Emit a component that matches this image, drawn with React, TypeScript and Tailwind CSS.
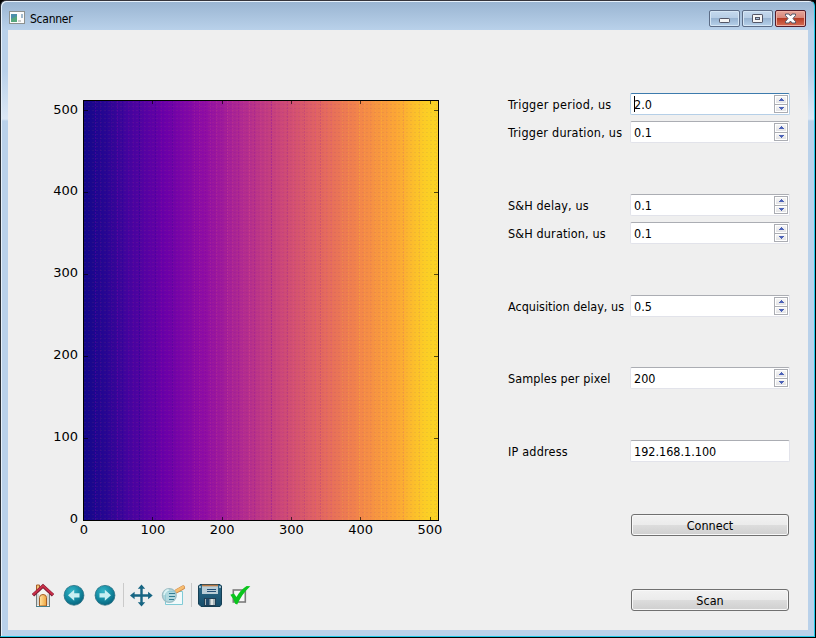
import type { ReactNode } from "react";

const UI_FONT = "font-['DejaVu_Sans_Condensed','DejaVu_Sans',sans-serif] [font-stretch:condensed]";

const PLASMA = [
  ["0", "#12078a"], ["0.05", "#220690"], ["0.12", "#41049d"], ["0.23", "#6a00a8"], ["0.34", "#8f0da4"],
  ["0.45", "#b12a90"], ["0.56", "#cc4778"], ["0.66", "#e16462"], ["0.77", "#f2844b"],
  ["0.88", "#fca636"], ["0.96", "#fcce25"], ["1", "#fad524"],
];

// Faint dotted column bands: offset inside the axes, and whether the band is lighter.
const BANDS = Array.from({ length: 64 }, (_, i) => ({ x: 5 + Math.round(i * 5.5), light: i % 3 !== 0, strong: i % 4 === 1 }));

function bandColor(x: number, light: boolean) {
  if (x < 100) return light ? "#8a00b0" : "#0d0887";
  if (x < 250) return light ? "#e05090" : "#7a00a8";
  return light ? "#ffc52d" : "#e8705c";
}

function Plot() {
  const ticks = [0, 1, 2, 3, 4, 5];
  return (
    <svg width="412" height="450" className="block font-['DejaVu_Sans',sans-serif] text-[13px] [font-stretch:normal]" fill="#000">
      <defs>
        <linearGradient id="plasma">
          {PLASMA.map(([o, c]) => <stop key={o} offset={o} stopColor={c} />)}
        </linearGradient>
        <pattern id="rows" width="4" height="4" patternUnits="userSpaceOnUse">
          <rect width="2" height="1" fill="#ff9030" opacity="0.06" />
          <rect x="2" y="2" width="2" height="1" fill="#20009a" opacity="0.06" />
        </pattern>
      </defs>
      <g shapeRendering="crispEdges">
        <rect x="43" y="10" width="356" height="421" fill="url(#plasma)" />
        <rect x="43" y="10" width="356" height="421" fill="url(#rows)" />
        {BANDS.map((b) => (
          <line key={b.x} x1={44.5 + b.x} x2={44.5 + b.x} y1="11" y2="430"
            stroke={bandColor(b.x, b.light)}
            strokeOpacity={b.strong ? 0.3 : 0.17} strokeDasharray="2 1" />
        ))}
        <rect x="43.5" y="10.5" width="355" height="420" fill="none" stroke="#000" />
        {ticks.map((t) => {
          const x = Math.round(43 + t * 69.3) + 0.5;
          const y = Math.round(429.5 - t * 81.9) + 0.5;
          return (
            <g key={t} stroke="#000" strokeOpacity="0.65">
              <path d={`M${x} 427V430M${x} 11V14`} />
              <path d={`M44 ${y}H48M394 ${y}H398`} />
            </g>
          );
        })}
      </g>
      {ticks.map((t) => (
        <g key={t}>
          <text x={43.8 + t * 69.2} y="444" textAnchor="middle">{t * 100}</text>
          <text x="38" y={433 - t * 81.9} textAnchor="end">{t * 100}</text>
        </g>
      ))}
    </svg>
  );
}

function SpinButtons() {
  return (
    <div className="mr-px flex h-[18px] w-[14px] shrink-0 flex-col gap-px border border-[#abadb3] bg-[#abadb3]">
      <div className="h-[8px] border border-white bg-gradient-to-b from-[#f5f5f5] to-[#e3e3e5]">
        <svg width="10" height="6" shapeRendering="crispEdges" className="block"><path d="M5 1h1v1h1v1h1v1H3V3h1V2h1z" fill="#4c62b8" /></svg>
      </div>
      <div className="h-[7px] border border-white bg-gradient-to-b from-[#f5f5f5] to-[#e3e3e5]">
        <svg width="10" height="5" shapeRendering="crispEdges" className="block"><path d="M3 1h5v1H7v1H6v1H5V3H4V2H3z" fill="#4c62b8" /></svg>
      </div>
    </div>
  );
}

function Row({ label, value, spin = true, focus = false, gap, tracking = "" }: { label: string; value: string; spin?: boolean; focus?: boolean; gap: string; tracking?: string }) {
  return (
    <div className={`flex h-[22px] items-center ${gap}`}>
      <div className={`w-[122px] whitespace-nowrap pt-[2px] text-[12.5px] ${tracking}`}>{label}</div>
      <div className={`flex h-[22px] w-[160px] items-center rounded-[2px] border bg-white text-[12.5px] ${focus ? "border-[#b5cfe7] border-t-[#3d7bad]" : "border-[#e2e3ea] border-t-[#abadb3]"}`}>
        <div className={`-mt-px ml-[3px] h-[16px] w-px ${focus ? "bg-black" : ""}`} />
        <span className="-ml-px flex-1 pt-[2px]">{value}</span>
        {spin && <SpinButtons />}
      </div>
    </div>
  );
}

function PushButton({ children, gap }: { children: ReactNode; gap: string }) {
  return (
    <button className={`ml-[123px] flex h-[22px] w-[158px] items-center justify-center rounded-[3px] border border-[#707070] bg-[linear-gradient(#f2f2f2,#ebebeb_49%,#dddddd_50%,#cfcfcf)] pt-[2px] text-[12.5px] shadow-[inset_0_0_0_1px_#f8f8f8] ${gap}`}>
      {children}
    </button>
  );
}

function Arrow({ flip = false }: { flip?: boolean }) {
  return (
    <svg width="22" height="24" viewBox="0 0 22 24" className="block">
      <defs>
        <radialGradient id={flip ? "orbR" : "orbL"} cx="0.4" cy="0.3" r="0.75">
          <stop offset="0" stopColor="#35b5c7" /><stop offset="0.55" stopColor="#148ba2" /><stop offset="1" stopColor="#07607a" />
        </radialGradient>
      </defs>
      <circle cx="11" cy="12.3" r="9.9" fill={flip ? "url(#orbR)" : "url(#orbL)"} stroke="#286f83" strokeWidth="0.8" />
      <path d="M5 12.3 11.2 6.8V10.2H16.5V14.6H11.2V17.8Z" fill="#c8eff2" transform={flip ? "translate(22 0) scale(-1 1)" : undefined} />
    </svg>
  );
}

function Toolbar() {
  return (
    <div className="flex h-6 items-center">
      <svg width="24" height="24" viewBox="0 0 24 24" className="block">
        <defs><linearGradient id="door"><stop stopColor="#ffe5a2" /><stop offset="1" stopColor="#efa33d" /></linearGradient></defs>
        <path d="M5.5 2H8.5V8H5.5Z" fill="#f4c477" stroke="#a65d29" strokeWidth="1" />
        <path d="M5.5 10 12 4 18.5 10V23.5H5.5Z" fill="#f4f4ef" stroke="#747d7e" />
        <path d="M7 11V22M17 11V22" stroke="#b6bbb9" />
        <path d="M8.5 23V14.5Q8.5 11.5 12 11.5T15.5 14.5V23Z" fill="url(#door)" stroke="#a45d24" />
        <path d="M5 23.5H19" stroke="#477f8c" />
        <path d="M2 12.2 12 3 22 12.2" fill="none" stroke="#7b1931" strokeWidth="3.4" />
        <path d="M2 11.8 12 2.7 22 11.8" fill="none" stroke="#c92f48" strokeWidth="1.9" />
      </svg>
      <div className="ml-[8px]"><Arrow /></div>
      <div className="ml-[9px]"><Arrow flip /></div>
      <div className="ml-[7px] h-6 w-px bg-[#cacaca]" />
      <svg width="24" height="24" viewBox="0 0 24 24" className="ml-[5px] block">
        <path d="M12.5 3V22M3 12.5H22" stroke="#176583" strokeWidth="2.4" />
        <path d="M12.5 1.5 16.2 5.7H8.8ZM12.5 23.5 8.8 19.3H16.2ZM1 12.5 5.6 8.8V16.2ZM23.7 12.5 19.1 8.8V16.2Z" fill="#176583" />
      </svg>
      <svg width="26" height="24" viewBox="0 0 26 24" className="ml-[8px] block">
        <path d="M4.5 8.5H21.5V21.5H4.5Z" fill="#f1fafb" stroke="#80cbd6" />
        <path d="M15.5 8.3 22 4.5" stroke="#c98343" strokeWidth="4.2" strokeLinecap="round" />
        <path d="M15.5 8 22 4.2" stroke="#f7bd70" strokeWidth="2.9" strokeLinecap="round" />
        <circle cx="8.3" cy="12.5" r="6.9" fill="#9ccdd5" fillOpacity="0.75" stroke="#9dbdc4" strokeWidth="1.3" />
        <path d="M3.2 12Q3.7 7.5 7.7 7" fill="none" stroke="#daf3f4" strokeWidth="1.8" />
        <path d="M8 10.5H14M8 13.5H14M8 16.5H13" stroke="#327e94" strokeWidth="1.1" />
      </svg>
      <div className="ml-[4px] h-6 w-px bg-[#cacaca]" />
      <svg width="24" height="24" viewBox="0 0 24 24" className="ml-[6px] block">
        <defs><linearGradient id="disk" x2="0" y2="1"><stop stopColor="#2c6a88" /><stop offset="1" stopColor="#174e6b" /></linearGradient></defs>
        <path d="M2 1.5H22L23.5 3V21.5L22 23.5H3L.5 21V3Z" fill="url(#disk)" stroke="#153f54" />
        <rect x="4" y="3" width="16" height="8" fill="#b9cdd6" /><path d="M4 2.5H20" stroke="#b87945" strokeWidth="1.6" />
        <path d="M9 6.5H18M9 8.5H18" stroke="#234e74" strokeWidth="1" />
        <path d="M2 3V5M22 3V5" stroke="#d9e4e8" strokeWidth="1.3" />
        <rect x="6.5" y="15.5" width="11" height="7" fill="#a7b5ba" stroke="#203f55" /><rect x="8" y="16" width="3.5" height="6" fill="#214b6b" />
        <path d="M14 16V22" stroke="#dee4e3" strokeWidth="2" />
      </svg>
      <svg width="24" height="24" viewBox="0 0 24 24" className="ml-[7px] block">
        <rect x="4.3" y="7" width="12" height="12" fill="#f7f7f7" stroke="#7b7b7b" strokeWidth="1.6" />
        <path d="M1.3 11.8 4.9 10.5 7.5 14Q11.5 6.8 17.7 3L21.3 3.2Q12.8 11 8.2 21.5L6.2 20.8Q4.3 15.2 1.3 11.8Z" fill="#0ac51d" />
      </svg>
    </div>
  );
}

function CaptionButton({ kind }: { kind: "min" | "max" | "close" }) {
  return (
    <div className={`flex h-[17px] w-[31px] items-center justify-center rounded-[2px] border ${kind === "close" ? "border-[#541c2a] bg-[linear-gradient(#e5a59a,#d88577_48%,#b83c25_50%,#d66d54)] shadow-[inset_0_0_0_1px_#efb0a3]" : "border-[#5c6c86] bg-[linear-gradient(#c5d9ee,#b6cde5_48%,#98b4d2_50%,#b7d1ea)] shadow-[inset_0_0_0_1px_#d5e6f5]"}`}>
      <svg width="13" height="13" viewBox="0 0 13 13" className="block shrink-0">
        {kind === "min" && <rect x="1.5" y="6.5" width="10" height="4" rx="0.7" fill="#f5f5f5" stroke="#535666" />}
        {kind === "max" && <><rect x="1.5" y="2.5" width="10" height="8" rx="0.6" fill="#f5f5f5" stroke="#535666" /><rect x="4.5" y="5.5" width="4" height="2" fill="#a8bfda" stroke="#535666" /></>}
        {kind === "close" && <path d="M1.5 2H5L6.5 4 8 2H11.5V3.5L9 6.5 11.5 9.5V11H8L6.5 9 5 11H1.5V9.5L4 6.5 1.5 3.5Z" fill="#fff" stroke="#535666" />}
      </svg>
    </div>
  );
}

export default function App() {
  return (
    <div className={`h-[638px] w-[816px] overflow-hidden bg-black text-black ${UI_FONT}`}>
      <div className="flex h-[637px] w-[815px] flex-col rounded-t-[6px] border border-b-[#20c8e8] border-l-[#292e35] border-r-[#20c8e8] border-t-[#35343b] bg-[linear-gradient(#99b4d1_0px,#b9d1ea_29px,#b9d1ea_70px,#dce8f5_118px,#b9d1ea_120px)] shadow-[inset_1px_1px_0_#e7f1fb]">
        <header className="flex h-[29px] shrink-0 items-start">
          <svg width="16" height="14" viewBox="0 0 16 14" className="ml-[8px] mt-[10px]">
            <rect x="0.5" y="0.5" width="15" height="12" fill="#fcfcfc" stroke="#8c918f" />
            <path d="M2 3H8V11H2Z" fill="#4c8faa" /><path d="M2 8 8 5V11H2Z" fill="#56a77d" />
            <path d="M13 3V7" stroke="#4778a0" /><path d="M9 10H12" stroke="#ccc" strokeWidth="2" />
          </svg>
          <span className="ml-[5px] mt-[10px] text-[12px] leading-[16px] tracking-[-0.25px]">Scanner</span>
          <div className="ml-auto mr-[8px] mt-[9px] flex gap-[2px]"><CaptionButton kind="min" /><CaptionButton kind="max" /><CaptionButton kind="close" /></div>
        </header>
        <main className="ml-[7px] flex h-[600px] w-[800px] shrink-0 bg-[#efefef]">
          <section className="w-[500px] pl-[32px] pt-[60px]">
            <Plot />
            <div className="-ml-[9px] mt-[43px]"><Toolbar /></div>
          </section>
          <section className="w-[300px] pt-[63px]">
            <Row label="Trigger period, us" value="2.0" focus gap="" tracking="tracking-[0.3px]" />
            <Row label="Trigger duration, us" value="0.1" gap="mt-[6px]" tracking="tracking-[0.23px]" />
            <Row label="S&H delay, us" value="0.1" gap="mt-[51px]" tracking="tracking-[0.15px]" />
            <Row label="S&H duration, us" value="0.1" gap="mt-[6px]" tracking="tracking-[0.15px]" />
            <Row label="Acquisition delay, us" value="0.5" gap="mt-[51px]" />
            <Row label="Samples per pixel" value="200" gap="mt-[50px]" tracking="tracking-[0.12px]" />
            <Row label="IP address" value="192.168.1.100" spin={false} gap="mt-[51px]" tracking="tracking-[0.2px]" />
            <PushButton gap="mt-[52px]">Connect</PushButton>
            <PushButton gap="mt-[53px]">Scan</PushButton>
          </section>
        </main>
      </div>
    </div>
  );
}
